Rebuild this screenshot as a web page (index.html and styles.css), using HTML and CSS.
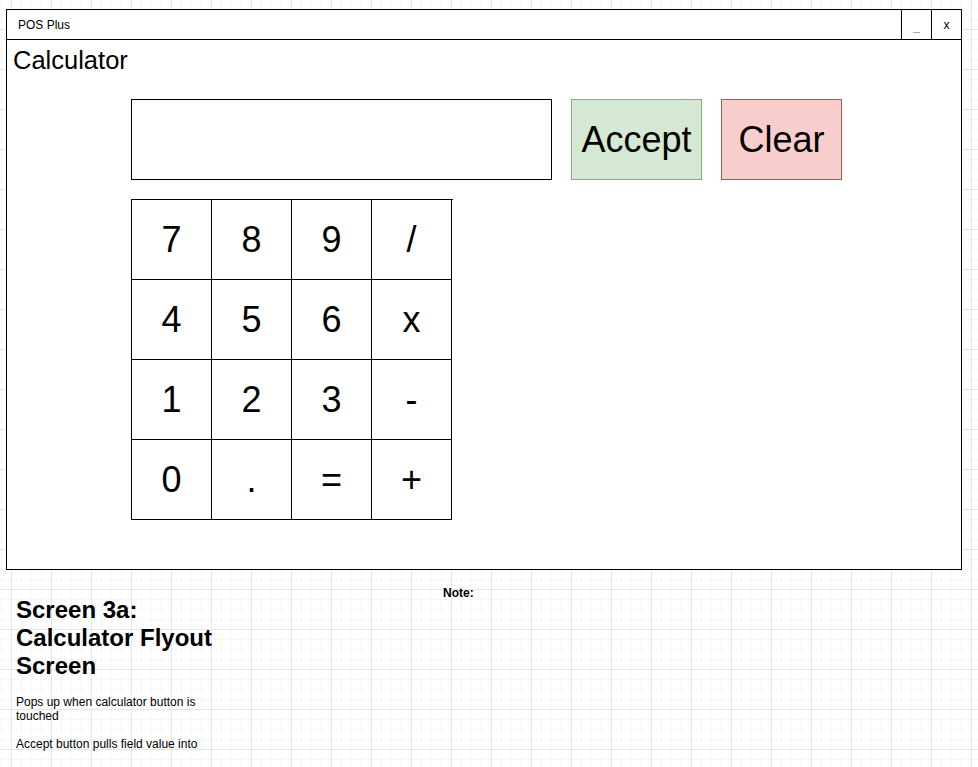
FILE: index.html
```html
<!DOCTYPE html>
<html>
<head>
<meta charset="utf-8">
<title>POS Plus - Calculator</title>
<link rel="stylesheet" href="styles.css">
</head>
<body>
<div class="window">
  <div class="titlebar">
    <span class="title">POS Plus</span>
    <div class="tb-btn tb-min">_</div>
    <div class="tb-btn tb-close">x</div>
  </div>
  <div class="content">
    <h1 class="heading">Calculator</h1>
    <div class="calc">
      <div class="calc-row">
        <div class="display"></div>
        <div class="btn btn-accept">Accept</div>
        <div class="btn btn-clear">Clear</div>
      </div>
      <div class="keypad">
        <div class="key">7</div><div class="key">8</div><div class="key">9</div><div class="key">/</div>
        <div class="key">4</div><div class="key">5</div><div class="key">6</div><div class="key">x</div>
        <div class="key">1</div><div class="key">2</div><div class="key">3</div><div class="key">-</div>
        <div class="key">0</div><div class="key">.</div><div class="key">=</div><div class="key">+</div>
      </div>
    </div>
  </div>
</div>
<div class="notes">
  <div class="desc">
    <h2 class="desc-title">Screen 3a: Calculator Flyout Screen</h2>
    <p class="desc-text">Pops up when calculator button is touched<br><br>Accept button pulls field value into</p>
  </div>
  <div class="note">Note:</div>
</div>
</body>
</html>
```
FILE: styles.css
```css
html, body {
  margin: 0;
  padding: 0;
  height: 767px;
  overflow: hidden;
}
body {
  font-family: "Liberation Sans", Arial, Helvetica, sans-serif;
  color: #000;
  background-color: #fff;
  background-image:
    linear-gradient(to right, #e6e6e6 1px, transparent 1px),
    linear-gradient(to bottom, #e6e6e6 1px, transparent 1px),
    linear-gradient(to right, #f7f7f7 1px, transparent 1px),
    linear-gradient(to bottom, #f7f7f7 1px, transparent 1px);
  background-size: 40px 40px, 40px 40px, 10px 10px, 10px 10px;
  background-position: 11px 29px, 11px 29px, 1px 9px, 1px 9px;
}
.window {
  box-sizing: border-box;
  margin: 9px 0 0 6px;
  width: 956px;
  height: 561px;
  border: 1px solid #000;
  background: #fff;
  display: flex;
  flex-direction: column;
}
.titlebar {
  height: 29px;
  border-bottom: 1px solid #000;
  display: flex;
  align-items: stretch;
}
.title {
  flex: 1;
  padding: 1px 0 0 11px;
  font-size: 12px;
  line-height: 28px;
}
.tb-btn {
  box-sizing: border-box;
  width: 30px;
  border-left: 1px solid #000;
  text-align: center;
  font-size: 12px;
}
.tb-min {
  color: #999;
  line-height: 26px;
  padding-top: 3px;
}
.tb-close {
  line-height: 28px;
  padding-top: 1px;
}
.content {
  flex: 1;
  padding-left: 6px;
}
.heading {
  margin: 6px 0 0;
  font-size: 25.5px;
  line-height: 28px;
  font-weight: normal;
}
.calc {
  margin: 25px 0 0 118px;
  display: flex;
  flex-direction: column;
  gap: 19px;
}
.calc-row {
  display: flex;
  gap: 19px;
}
.display {
  box-sizing: border-box;
  width: 421px;
  height: 81px;
  border: 1px solid #000;
}
.btn {
  box-sizing: border-box;
  height: 81px;
  display: flex;
  align-items: center;
  justify-content: center;
  font-size: 36px;
}
.btn-accept {
  width: 131px;
  background: #d5e8d4;
  border: 1px solid #82b366;
}
.btn-clear {
  width: 121px;
  background: #f8cecc;
  border: 1px solid #b85450;
}
.keypad {
  display: grid;
  grid-template-columns: repeat(4, 80px);
  grid-auto-rows: 80px;
  width: 321px;
  border-left: 1px solid #000;
  border-top: 1px solid #000;
}
.key {
  border-right: 1px solid #000;
  border-bottom: 1px solid #000;
  display: flex;
  align-items: center;
  justify-content: center;
  font-size: 36px;
}
.notes {
  display: flex;
  align-items: flex-start;
  padding: 17px 0 0 16px;
}
.desc {
  width: 205px;
  margin-top: 9px;
}
.desc-title {
  margin: 0;
  font-size: 24px;
  line-height: 28px;
  font-weight: bold;
}
.desc-text {
  margin: 15px 0 0;
  font-size: 12px;
  line-height: 14px;
}
.note {
  margin-left: 222px;
  font-size: 12px;
  line-height: 13px;
  font-weight: bold;
}
```
